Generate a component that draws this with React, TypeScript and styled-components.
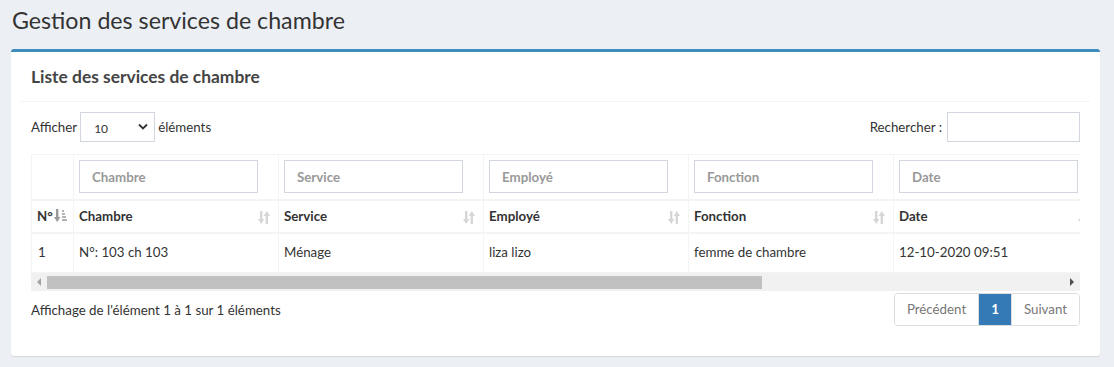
import React from "react";
import styled, { createGlobalStyle } from "styled-components";

const GlobalStyle = createGlobalStyle`
  html, body {
    margin: 0;
    padding: 0;
    background: #ecf0f5;
    font-family: "Source Sans Pro", Lato, "Liberation Sans", sans-serif;
    font-size: 13.3px;
    color: #333;
  }
  * { box-sizing: border-box; }
`;

interface Column {
  key: string;
  label: string;
}

const columns: Column[] = [
  { key: "chambre", label: "Chambre" },
  { key: "service", label: "Service" },
  { key: "employe", label: "Employé" },
  { key: "fonction", label: "Fonction" },
  { key: "date", label: "Date" },
  { key: "statut", label: "Statut" },
  { key: "actions", label: "Actions" },
];

const rows = [
  {
    id: 1,
    chambre: "N°: 103 ch 103",
    service: "Ménage",
    employe: "liza lizo",
    fonction: "femme de chambre",
    date: "12-10-2020 09:51",
    statut: "",
    actions: "",
  },
];

const FIRST_COL = 42;
const COL = 205;
const TABLE_WIDTH = FIRST_COL + COL * columns.length;
const VIEW_WIDTH = 1049;

const SortIcon: React.FC = () => (
  <svg width="12" height="15" viewBox="0 0 12 15">
    <g fill="#d6d6d6">
      <rect x="2" y="1" width="2.4" height="9" />
      <polygon points="0,9 6.4,9 3.2,14" />
      <rect x="7.6" y="5" width="2.4" height="9" />
      <polygon points="5.6,6 12,6 8.8,1" />
    </g>
  </svg>
);

const SortAscIcon: React.FC = () => (
  <svg width="13" height="15" viewBox="0 0 13 15">
    <g fill="#999">
      <rect x="2" y="1" width="2.4" height="9" />
      <polygon points="0,9 6.4,9 3.2,14" />
    </g>
    <g fill="#b3b3b3">
      <rect x="8" y="2" width="2" height="2" />
      <rect x="8" y="5" width="3" height="2" />
      <rect x="8" y="8" width="4" height="2" />
      <rect x="8" y="11" width="5" height="2" />
    </g>
  </svg>
);

const ChevronDown: React.FC = () => (
  <svg width="10" height="7" viewBox="0 0 10 7">
    <path d="M1 1.5 L5 5.5 L9 1.5" fill="none" stroke="#333" strokeWidth="1.8" />
  </svg>
);

const App: React.FC = () => {
  // the table is wider than its frame; the thumb shows the visible share
  const thumbPct = (VIEW_WIDTH / TABLE_WIDTH) * 100 - 0.7;

  return (
    <>
      <GlobalStyle />
      <Page>
        <PageTitle>Gestion des services de chambre</PageTitle>
        <Box>
          <BoxHeader>
            <BoxTitle>Liste des services de chambre</BoxTitle>
          </BoxHeader>
          <BoxBody>
            <Controls>
              <Label>
                Afficher
                <SelectWrap>
                  <Select defaultValue="10">
                    <option value="10">10</option>
                    <option value="25">25</option>
                    <option value="50">50</option>
                  </Select>
                  <SelectArrow>
                    <ChevronDown />
                  </SelectArrow>
                </SelectWrap>
                éléments
              </Label>
              <Label>
                Rechercher :
                <SearchInput type="text" />
              </Label>
            </Controls>

            <ScrollArea>
              <Table style={{ width: TABLE_WIDTH }}>
                <thead>
                  <tr>
                    <FilterCell $first />
                    {columns.map((c) => (
                      <FilterCell key={c.key}>
                        <FilterInput placeholder={c.label} />
                      </FilterCell>
                    ))}
                  </tr>
                  <tr>
                    <HeadCell $first>
                      N°
                      <SortBox $inline>
                        <SortAscIcon />
                      </SortBox>
                    </HeadCell>
                    {columns.map((c) => (
                      <HeadCell key={c.key}>
                        {c.label}
                        <SortBox>
                          <SortIcon />
                        </SortBox>
                      </HeadCell>
                    ))}
                  </tr>
                </thead>
                <tbody>
                  {rows.map((r) => (
                    <tr key={r.id}>
                      <Cell $first>{r.id}</Cell>
                      <Cell>{r.chambre}</Cell>
                      <Cell>{r.service}</Cell>
                      <Cell>{r.employe}</Cell>
                      <Cell>{r.fonction}</Cell>
                      <Cell>{r.date}</Cell>
                      <Cell>{r.statut}</Cell>
                      <Cell>{r.actions}</Cell>
                    </tr>
                  ))}
                </tbody>
              </Table>
            </ScrollArea>

            <ScrollBar>
              <ScrollButton>
                <Arrow $dir="left" />
              </ScrollButton>
              <ScrollTrack>
                <ScrollThumb style={{ width: `${thumbPct}%` }} />
              </ScrollTrack>
              <ScrollButton>
                <Arrow $dir="right" />
              </ScrollButton>
            </ScrollBar>

            <Footer>
              <Info>Affichage de l'élément 1 à 1 sur 1 éléments</Info>
              <Pagination>
                <PageButton $disabled>Précédent</PageButton>
                <PageButton $active>1</PageButton>
                <PageButton $disabled>Suivant</PageButton>
              </Pagination>
            </Footer>
          </BoxBody>
        </Box>
      </Page>
    </>
  );
};

const Page = styled.div`
  padding: 0 14px 11px 11px;
`;

const PageTitle = styled.h1`
  margin: 0;
  padding: 6px 1px 14px;
  font-size: 23.2px;
  font-weight: 400;
  line-height: 29px;
  color: #333;
`;

const Box = styled.div`
  background: #fff;
  border-top: 3px solid #3c8dbc;
  border-radius: 3px;
  box-shadow: 0 1px 1px rgba(0, 0, 0, 0.1);
`;

const BoxHeader = styled.div`
  margin: 0 10px;
  padding: 15px 10px 14px;
  border-bottom: 1px solid #f4f4f4;
`;

const BoxTitle = styled.h3`
  margin: 0;
  font-size: 17.4px;
  font-weight: 700;
  line-height: 20px;
  color: #444;
`;

const BoxBody = styled.div`
  padding: 10px 20px 30px;
`;

const Controls = styled.div`
  display: flex;
  justify-content: space-between;
  align-items: center;
  margin-bottom: 12px;
`;

const Label = styled.label`
  display: flex;
  align-items: center;
  gap: 3px;
`;

const SelectWrap = styled.div`
  position: relative;
  width: 75px;
  height: 30px;
`;

const Select = styled.select`
  appearance: none;
  width: 100%;
  height: 100%;
  padding: 3px 13px 0;
  font-family: inherit;
  font-size: 12px;
  color: #333;
  background: #fff;
  border: 1px solid #d2d6de;
  border-radius: 0;
  outline: none;
`;

const SelectArrow = styled.span`
  position: absolute;
  right: 7px;
  top: 11px;
  display: flex;
  pointer-events: none;
`;

const SearchInput = styled.input`
  width: 133px;
  height: 30px;
  margin-left: 2px;
  border: 1px solid #d2d6de;
  border-radius: 0;
  outline: none;
`;

const ScrollArea = styled.div`
  width: 100%;
  overflow: hidden;
`;

const Table = styled.table`
  border-collapse: collapse;
  table-layout: fixed;
  border: 1px solid #f4f4f4;
`;

const FilterCell = styled.th<{ $first?: boolean }>`
  width: ${(p) => (p.$first ? `${FIRST_COL}px` : `${COL}px`)};
  padding: 5px 20px 5px 5px;
  border: 1px solid #f4f4f4;
  border-bottom: 2px solid #f4f4f4;
  height: 45px;
`;

const FilterInput = styled.input`
  display: block;
  width: 100%;
  height: 33px;
  padding: 0 12px;
  font-family: inherit;
  font-size: 13.3px;
  font-weight: 700;
  color: #333;
  border: 1px solid #d2d6de;
  border-radius: 0;
  outline: none;

  &::placeholder {
    color: #999;
    font-weight: 700;
  }
`;

const HeadCell = styled.th<{ $first?: boolean }>`
  position: relative;
  height: 33px;
  padding: 5px ${(p) => (p.$first ? "4px" : "30px")} 6px 5px;
  text-align: left;
  font-weight: 700;
  line-height: 20px;
  border: 1px solid #f4f4f4;
  border-bottom: 2px solid #f4f4f4;
  white-space: nowrap;
`;

const SortBox = styled.span<{ $inline?: boolean }>`
  display: inline-flex;
  ${(p) =>
    p.$inline
      ? `margin-left: 1px; vertical-align: -2px;`
      : `position: absolute; right: 8px; top: 9px;`}
`;

const Cell = styled.td<{ $first?: boolean }>`
  height: 39px;
  padding: 8px 5px 10px ${(p) => (p.$first ? "6px" : "5px")};
  line-height: 20px;
  vertical-align: top;
  border: 1px solid #f4f4f4;
  white-space: nowrap;
`;

const ScrollBar = styled.div`
  display: flex;
  height: 18px;
  background: #f1f1f1;
`;

const ScrollButton = styled.div`
  flex: 0 0 16px;
  display: flex;
  align-items: center;
  justify-content: center;
`;

const Arrow = styled.span<{ $dir: "left" | "right" }>`
  width: 0;
  height: 0;
  border-top: 4px solid transparent;
  border-bottom: 4px solid transparent;
  ${(p) =>
    p.$dir === "left"
      ? `border-right: 4px solid #a3a3a3;`
      : `border-left: 4px solid #505050;`}
`;

const ScrollTrack = styled.div`
  flex: 1;
  padding: 3px 0 2px;
`;

const ScrollThumb = styled.div`
  height: 100%;
  background: #c1c1c1;
`;

const Footer = styled.div`
  display: flex;
  justify-content: space-between;
  align-items: flex-start;
  margin-top: 2px;
`;

const Info = styled.div`
  padding-top: 7px;
  line-height: 20px;
`;

const Pagination = styled.div`
  display: flex;
  border: 1px solid #ddd;
  border-radius: 4px;
  overflow: hidden;
`;

const PageButton = styled.span<{ $active?: boolean; $disabled?: boolean }>`
  padding: 6px 12px;
  line-height: 19px;
  color: ${(p) => (p.$active ? "#fff" : p.$disabled ? "#777" : "#337ab7")};
  background: ${(p) => (p.$active ? "#337ab7" : "#fff")};
  font-weight: ${(p) => (p.$active ? 700 : 400)};
  & + & {
    border-left: 1px solid #ddd;
  }
`;

export default App;
